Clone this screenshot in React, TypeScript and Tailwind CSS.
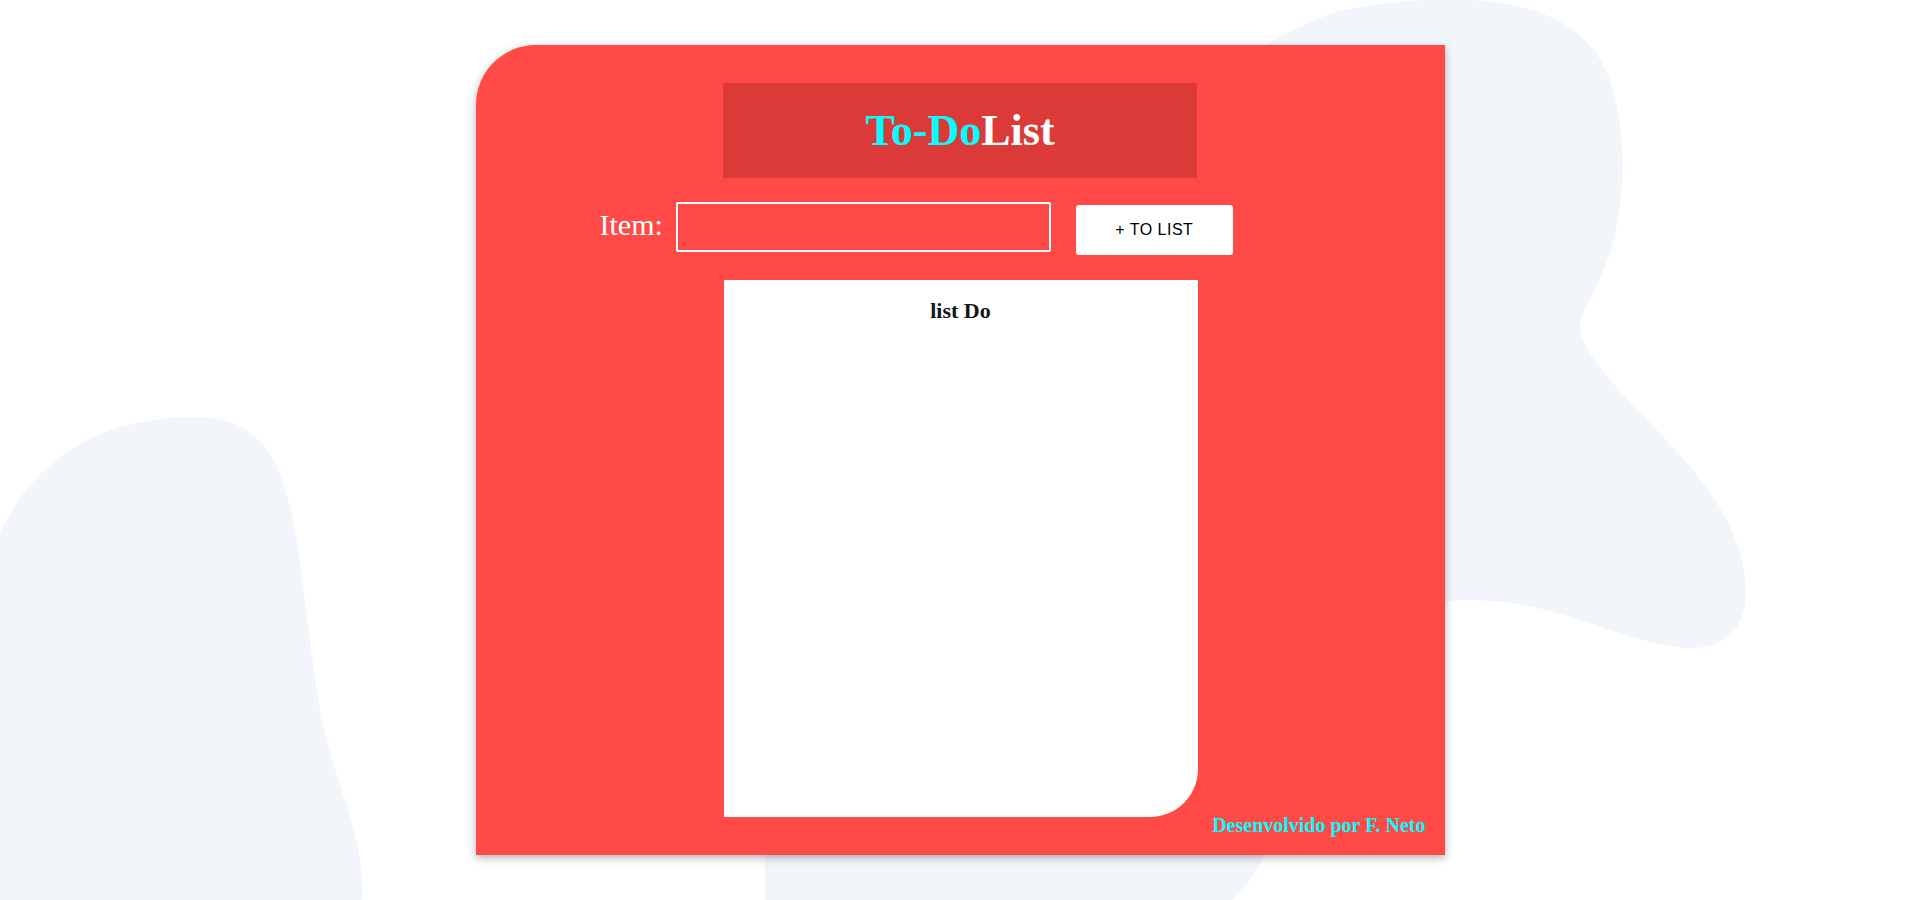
export default function App() {
    return (
        <div className="relative w-full h-[900px] overflow-hidden bg-white font-['Liberation_Serif',serif]">
            {/* background blobs */}
            <svg className="absolute inset-0 w-full h-full" viewBox="0 0 1920 900" preserveAspectRatio="none">
                <path
                    fill="#f2f6fb"
                    d="M 1335 12 C 1380 2, 1430 -2, 1469 0 C 1540 4, 1590 25, 1610 80 C 1630 140, 1625 220, 1604 269 C 1595 295, 1578 315, 1580 330 C 1585 360, 1630 400, 1680 455 C 1730 510, 1750 560, 1745 605 C 1740 635, 1720 648, 1690 648 C 1650 648, 1590 620, 1530 606 C 1470 595, 1420 600, 1380 620 C 1340 660, 1300 800, 1250 880 L 1232 900 L 765 900 C 762 850, 770 780, 800 700 C 900 400, 1100 100, 1335 12 Z"
                />
                <path
                    fill="#f2f6fb"
                    d="M 0 532 C 40 450, 110 417, 195 417 C 255 417, 280 450, 295 530 C 305 590, 310 650, 320 710 C 335 790, 365 830, 362 900 L 0 900 Z"
                />
            </svg>

            <div className="relative mx-auto mt-[45px] w-[969px] bg-[#ff4a47] rounded-tl-[60px] shadow-[0_3px_8px_rgba(0,0,0,0.3)] pt-[38px] pb-[15px]">
                <div className="mx-auto w-[474px] h-[95px] bg-[#dc3a38] flex items-center justify-center">
                    <h1 className="text-[44px] font-bold leading-none">
                        <span className="text-[#00ffff]">To-Do</span>
                        <span className="text-white">List</span>
                    </h1>
                </div>

                <div className="flex items-start mt-[24px] pl-[124px]">
                    <label className="mt-[0px] text-[30px] text-white">Item:</label>
                    <input
                        type="text"
                        className="ml-[13px] w-[375px] h-[50px] border-2 border-white rounded-[2px] bg-transparent outline-none text-white px-2"
                    />
                    <button className="ml-[25px] mt-[3px] w-[157px] h-[50px] bg-white rounded-[3px] text-black text-[16px] font-medium tracking-[0.5px] font-['Liberation_Sans',Arial,sans-serif]">
                        + TO LIST
                    </button>
                </div>

                <div className="grid grid-cols-[248px_474px_1fr] mt-[25px]">
                    <div />
                    <div className="h-[537px] mb-[23px] bg-white rounded-br-[48px] pt-[14px]">
                        <h3 className="text-center text-[22px] font-bold text-[#151515]">list Do</h3>
                    </div>
                    <div className="self-end text-right pr-[19px]">
                        <span className="text-[20px] font-bold text-[#00ffff]">Desenvolvido por F. Neto</span>
                    </div>
                </div>
            </div>
        </div>
    );
}
